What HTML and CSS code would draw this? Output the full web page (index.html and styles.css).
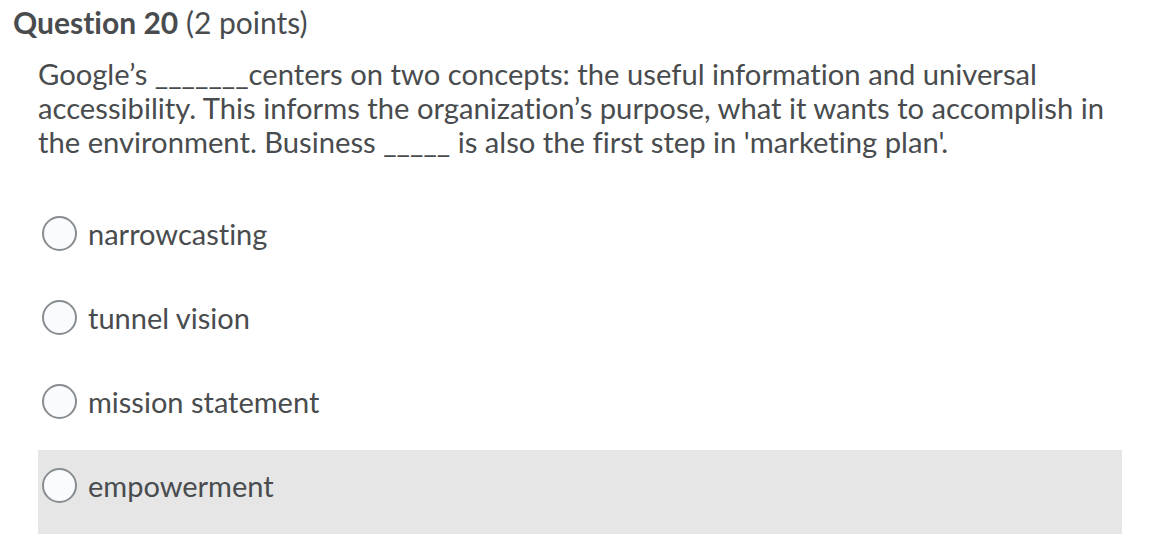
FILE: index.html
```html
<!DOCTYPE html>
<html>
<head>
<meta charset="utf-8">
<link rel="stylesheet" href="styles.css">
</head>
<body>
<div class="question">
  <h2 class="q-title"><span class="q-num">Question 20</span> (2 points)</h2>
  <div class="q-body">
    <p class="q-text">Google’s _______centers on two concepts: the useful information and universal accessibility. This informs the organization’s purpose, what it wants to accomplish in the environment. Business _____ is also the first step in 'marketing plan'.</p>
    <ul class="options">
      <li class="option"><span class="radio"></span><span class="label">narrowcasting</span></li>
      <li class="option"><span class="radio"></span><span class="label">tunnel vision</span></li>
      <li class="option"><span class="radio"></span><span class="label">mission statement</span></li>
      <li class="option option-hover"><span class="radio"></span><span class="label">empowerment</span></li>
    </ul>
  </div>
</div>
</body>
</html>
```

FILE: styles.css
```css
html, body {
  margin: 0;
  padding: 0;
  background: #ffffff;
}
body {
  font-family: Lato, "Open Sans", sans-serif;
  color: #494c4e;
  font-variant-ligatures: none;
  font-feature-settings: "liga" 0, "clig" 0;
}
.question {
  padding: 4px 0 0 13px;
}
.q-title {
  margin: 0;
  font-size: 30px;
  line-height: 36px;
  font-weight: 400;
}
.q-num {
  font-weight: 700;
}
.q-body {
  padding-left: 25px;
  width: 1084px;
}
.q-text {
  margin: 17px 0 0 0;
  font-size: 29.2px;
  line-height: 34px;
}
.options {
  list-style: none;
  margin: 39px 0 0 0;
  padding: 0;
}
.option {
  display: flex;
  align-items: center;
  height: 84px;
  box-sizing: border-box;
  padding: 0 0 13px 4px;
  gap: 11px;
}
.option-hover {
  background: #e6e6e6;
}
.radio {
  width: 31px;
  height: 31px;
  border: 2px solid #888d90;
  border-radius: 50%;
  background: #f9fbff;
  flex: none;
}
.label {
  font-size: 29px;
  line-height: 36px;
}
```
